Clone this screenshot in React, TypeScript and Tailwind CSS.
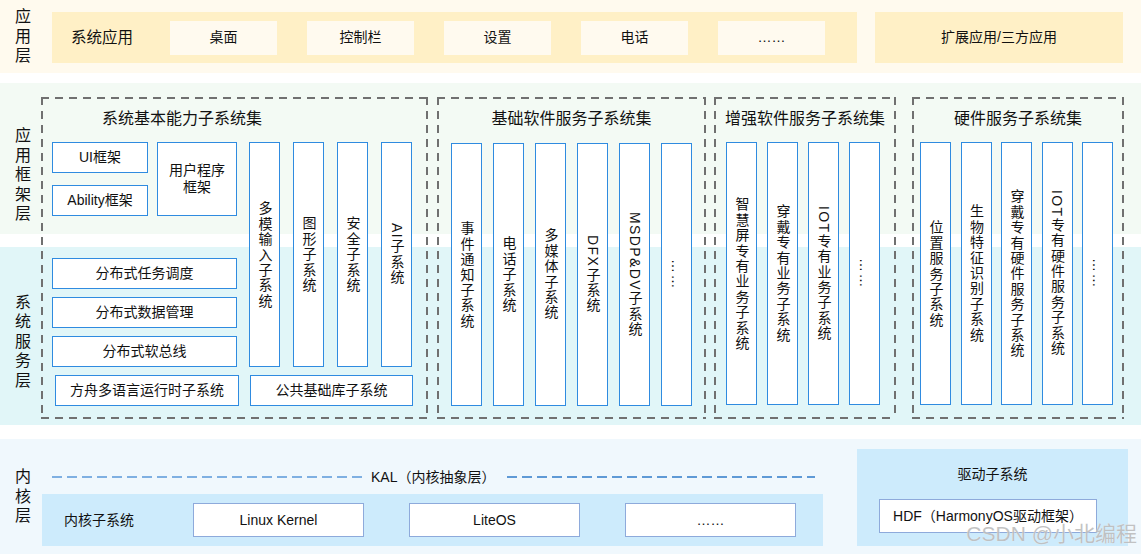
import React from "react";

const DASH =
  "[background-image:repeating-linear-gradient(90deg,#707070_0_8px,transparent_8px_14px),repeating-linear-gradient(90deg,#707070_0_8px,transparent_8px_14px),repeating-linear-gradient(180deg,#707070_0_8px,transparent_8px_14px),repeating-linear-gradient(180deg,#707070_0_8px,transparent_8px_14px)] [background-size:100%_2px,100%_2px,2px_100%,2px_100%] [background-position:left_top,left_bottom,left_top,right_top] bg-no-repeat";

function VLabel({ text }: { text: string }) {
  return (
    <div className="flex flex-col text-[16px] leading-[19.5px] text-[#111]">
      {text.split("").map((c, i) => (
        <div key={i}>{c}</div>
      ))}
    </div>
  );
}

function VCol({ t, tall }: { t: string; tall?: boolean }) {
  return (
    <div
      className={
        (tall ? "h-[263px]" : "h-[225px]") +
        " w-[31px] shrink-0 bg-white border border-[#2f8be0] flex items-center justify-center"
      }
    >
      <span className="[writing-mode:vertical-rl] tracking-[1.4px] text-[14px] leading-[16px] text-[#111]">
        {t}
      </span>
    </div>
  );
}

function BBox({ className, children }: { className: string; children: React.ReactNode }) {
  return (
    <div
      className={
        className +
        " bg-white border border-[#2f8be0] flex items-center justify-center text-[14px] leading-[17px] text-[#111] text-center"
      }
    >
      {children}
    </div>
  );
}

export default function App() {
  return (
    <div className="relative w-[1141px] h-[554px] overflow-hidden bg-white font-['Liberation_Sans','Noto_Sans_CJK_SC',sans-serif] text-[#111]">
      {/* 应用层 */}
      <div className="flex items-start h-[73px] bg-[#fffaee]">
        <div className="w-[41px] shrink-0 pl-[15px] h-full flex items-center">
          <VLabel text="应用层" />
        </div>
        <div className="ml-[11px] mt-[12px] w-[805px] h-[51px] bg-[#fff0c6] flex items-center">
          <div className="pl-[19px] w-[118px] shrink-0 text-[15.5px]">系统应用</div>
          <div className="flex gap-[30px]">
            {["桌面", "控制栏", "设置", "电话", "……"].map((t) => (
              <div
                key={t}
                className="w-[107px] h-[34px] bg-[#fffaef] flex items-center justify-center text-[14px]"
              >
                {t}
              </div>
            ))}
          </div>
        </div>
        <div className="ml-[18px] mt-[12px] w-[248px] h-[51px] bg-[#fff0c6] flex items-center justify-center text-[14px]">
          扩展应用/三方应用
        </div>
      </div>

      {/* 应用框架层 + 系统服务层 */}
      <div className="mt-[10px] h-[342px] flex [background-image:linear-gradient(to_bottom,#f3faf4_0px,#f3faf4_151px,#ffffff_151px,#ffffff_164px,#e1f6f8_164px,#e1f6f8_100%)]">
        <div className="w-[41px] shrink-0 pl-[15px] pt-[43px] flex flex-col">
          <VLabel text="应用框架层" />
          <div className="mt-[69px]">
            <VLabel text="系统服务层" />
          </div>
        </div>
        <div className="pt-[14px] flex items-start">
          {/* 系统基本能力子系统集 */}
          <div className={"w-[387px] h-[322px] flex flex-col " + DASH}>
            <div className="h-[44px] pl-[61px] flex items-center text-[16px]">系统基本能力子系统集</div>
            <div className="flex mt-[1px] pl-[11px]">
              <div className="w-[185px] shrink-0 flex flex-col">
                <div className="flex h-[74px]">
                  <div className="w-[96px] flex flex-col gap-[12px]">
                    <BBox className="h-[31px]">UI框架</BBox>
                    <BBox className="h-[31px]">Ability框架</BBox>
                  </div>
                  <BBox className="ml-[9px] w-[80px] h-[74px]">
                    用户程序
                    <br />
                    框架
                  </BBox>
                </div>
                <div className="mt-[42px] flex flex-col gap-[8px]">
                  <BBox className="h-[31px]">分布式任务调度</BBox>
                  <BBox className="h-[31px]">分布式数据管理</BBox>
                  <BBox className="h-[31px]">分布式软总线</BBox>
                </div>
              </div>
              <div className="ml-[12px] flex gap-[13px]">
                <VCol t="多模输入子系统" />
                <VCol t="图形子系统" />
                <VCol t="安全子系统" />
                <VCol t="AI子系统" />
              </div>
            </div>
            <div className="mt-[8px] flex pl-[14px]">
              <BBox className="w-[184px] h-[31px]">方舟多语言运行时子系统</BBox>
              <BBox className="ml-[11px] w-[163px] h-[31px]">公共基础库子系统</BBox>
            </div>
          </div>

          {/* 基础软件服务子系统集 */}
          <div className={"ml-[9px] w-[269px] h-[322px] flex flex-col " + DASH}>
            <div className="h-[44px] flex items-center justify-center text-[16px]">基础软件服务子系统集</div>
            <div className="mt-[2px] pl-[14px] flex gap-[11px]">
              {["事件通知子系统", "电话子系统", "多媒体子系统", "DFX子系统", "MSDP&DV子系统", "……"].map((t) => (
                <VCol key={t} t={t} tall />
              ))}
            </div>
          </div>

          {/* 增强软件服务子系统集 */}
          <div className={"ml-[8px] w-[182px] h-[322px] flex flex-col " + DASH}>
            <div className="h-[44px] flex items-center justify-center text-[16px]">增强软件服务子系统集</div>
            <div className="mt-[1px] pl-[12px] flex gap-[10px]">
              {["智慧屏专有业务子系统", "穿戴专有业务子系统", "IOT专有业务子系统", "……"].map((t) => (
                <VCol key={t} t={t} tall />
              ))}
            </div>
          </div>

          {/* 硬件服务子系统集 */}
          <div className={"ml-[16px] w-[212px] h-[322px] flex flex-col " + DASH}>
            <div className="h-[44px] flex items-center justify-center text-[16px]">硬件服务子系统集</div>
            <div className="mt-[1px] pl-[8px] flex gap-[9.5px]">
              {["位置服务子系统", "生物特征识别子系统", "穿戴专有硬件服务子系统", "IOT专有硬件服务子系统", "……"].map(
                (t) => (
                  <VCol key={t} t={t} tall />
                )
              )}
            </div>
          </div>
        </div>
      </div>

      {/* 内核层 */}
      <div className="mt-[14px] h-[115px] bg-[#f0f8fd] flex items-start">
        <div className="w-[41px] shrink-0 pl-[15px] pt-[28px]">
          <VLabel text="内核层" />
        </div>
        <div className="ml-[1px] w-[781px] shrink-0 pt-[28px] flex flex-col">
          <div className="h-[20px] flex items-center pl-[10px] pr-[8px]">
            <div className="w-[312px] h-[2.5px] shrink-0 [background-image:repeating-linear-gradient(to_right,#7fb0e2_0_10px,transparent_10px_15px)]" />
            <div className="ml-[7px] text-[14px] whitespace-nowrap">KAL（内核抽象层）</div>
            <div className="ml-[12px] flex-1 h-[2.5px] [background-image:repeating-linear-gradient(to_right,#5f9ad6_0_10px,transparent_10px_15px)]" />
          </div>
          <div className="mt-[7px] h-[52px] bg-[#cdebfc] flex items-center pl-[22px]">
            <div className="w-[129px] shrink-0 text-[14px]">内核子系统</div>
            <div className="flex gap-[45px]">
              {["Linux Kernel", "LiteOS", "……"].map((t) => (
                <div
                  key={t}
                  className="w-[171px] h-[34px] bg-white border border-[#8eaadb] flex items-center justify-center text-[14px]"
                >
                  {t}
                </div>
              ))}
            </div>
          </div>
        </div>
        <div className="ml-[34px] mt-[10px] w-[271px] h-[97px] bg-[#cdebfc] flex flex-col">
          <div className="h-[50px] flex items-center justify-center text-[14px]">驱动子系统</div>
          <div className="ml-[22px] w-[218px] h-[34px] bg-white border border-[#8eaadb] flex items-center justify-center text-[14px]">
            HDF（HarmonyOS驱动框架）
          </div>
        </div>
      </div>

      {/* watermark */}
      <div className="absolute right-[4px] bottom-[8px] text-[21px] leading-[24px] text-[#bdbdbd] opacity-90 [text-shadow:0_0_1px_#ffffff] pointer-events-none">
        CSDN @小北编程
      </div>
    </div>
  );
}
